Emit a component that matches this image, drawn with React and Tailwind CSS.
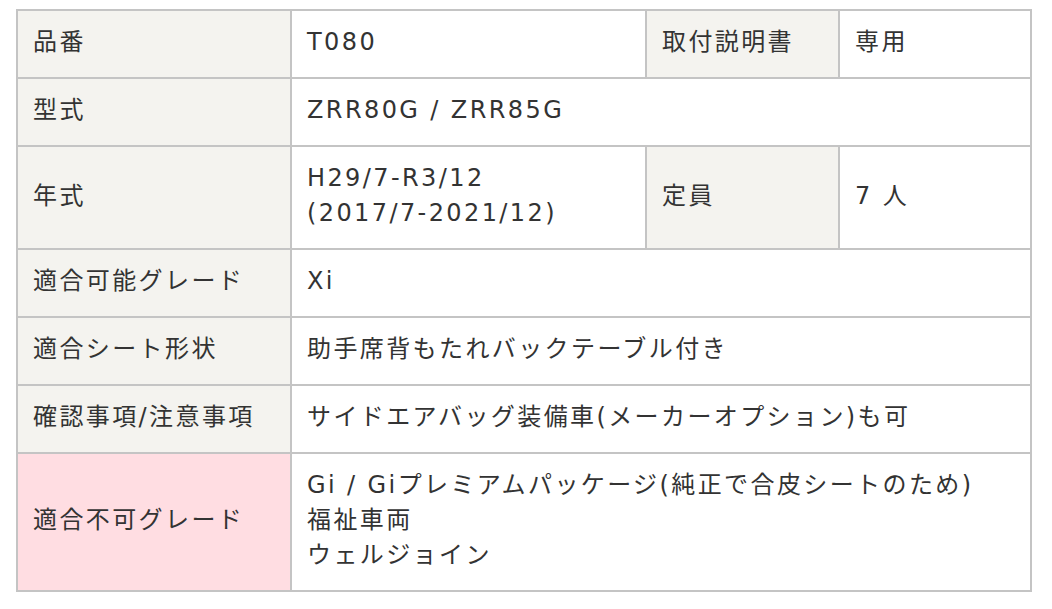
const border = "border-2 border-[#c4c4c4] px-[15px] pt-[14px] pb-[17px] align-middle";
const head = `${border} bg-[#f4f3ef] font-normal text-left`;
const cell = `${border} bg-white`;

export default function App() {
  return (
    <div className="min-h-[609px] bg-white pt-[9px] pl-[16px]">
      <table
        className="w-[1014px] table-fixed border-collapse text-[24px] leading-[35px] tracking-[0.1em] text-[#333]"
        style={{ fontFamily: '"DejaVu Sans", "Noto Sans CJK JP", sans-serif' }}
      >
        <colgroup>
          <col className="w-[274px]" />
          <col className="w-[355px]" />
          <col className="w-[193px]" />
          <col className="w-[192px]" />
        </colgroup>
        <tbody>
          <tr>
            <th className={head}>品番</th>
            <td className={cell}>T080</td>
            <th className={head}>取付説明書</th>
            <td className={cell}>専用</td>
          </tr>
          <tr>
            <th className={head}>型式</th>
            <td className={cell} colSpan={3}>ZRR80G / ZRR85G</td>
          </tr>
          <tr>
            <th className={head}>年式</th>
            <td className={cell}>
              H29/7-R3/12
              <br />
              (2017/7-2021/12)
            </td>
            <th className={head}>定員</th>
            <td className={cell}>7 人</td>
          </tr>
          <tr>
            <th className={head}>適合可能グレード</th>
            <td className={cell} colSpan={3}>Xi</td>
          </tr>
          <tr>
            <th className={head}>適合シート形状</th>
            <td className={cell} colSpan={3}>助手席背もたれバックテーブル付き</td>
          </tr>
          <tr>
            <th className={head}>確認事項/注意事項</th>
            <td className={cell} colSpan={3}>サイドエアバッグ装備車(メーカーオプション)も可</td>
          </tr>
          <tr>
            <th className={`${border} bg-[#ffdde2] font-normal text-left`}>
              適合不可グレード
            </th>
            <td className={cell} colSpan={3}>
              Gi / Giプレミアムパッケージ(純正で合皮シートのため)
              <br />
              福祉車両
              <br />
              ウェルジョイン
            </td>
          </tr>
        </tbody>
      </table>
    </div>
  );
}
